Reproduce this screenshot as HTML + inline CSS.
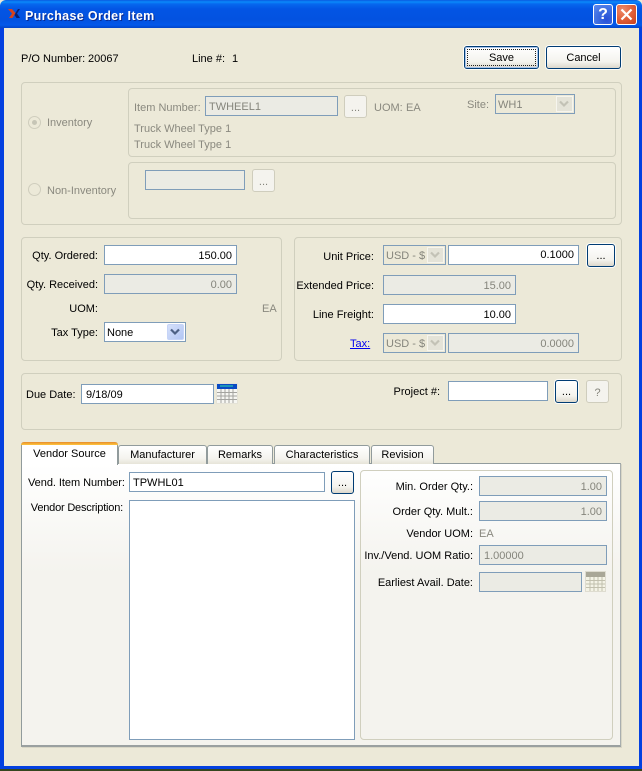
<!DOCTYPE html>
<html><head><meta charset="utf-8"><title>Purchase Order Item</title>
<style>
html,body{margin:0;padding:0;}
body{width:642px;height:771px;overflow:hidden;position:relative;background:#ece9d8;font:11px/14px "Liberation Sans",sans-serif;color:#000;letter-spacing:0;}
body *{position:absolute;box-sizing:border-box;}
.l{white-space:nowrap;height:14px;margin-top:1px;}
.r{text-align:right;}
.d{color:#8a897f;}
.g{border:1px solid #d0cfbe;border-radius:4px;}
.i{border:1px solid #7f9db9;background:#fff;height:20px;padding:3px 4px 0 4px;white-space:nowrap;}
.x{background:#ebebe4;color:#85857c;}
.b{border:1px solid #003c74;border-radius:3px;background:linear-gradient(#fff,#f4f3ee 70%,#dcd8cc);text-align:center;height:23px;line-height:22px;box-shadow:0 0 0 1px #fdfcf8;}
.bd{border:1px solid #cfcdbd;border-radius:3px;background:#f4f3ee;color:#85857c;text-align:center;height:23px;line-height:24px;}
.t{border:1px solid #919b9c;border-bottom:0;border-radius:3px 3px 0 0;background:linear-gradient(#fff,#f4f3ee 70%,#e6e4d8);text-align:center;height:19px;line-height:19px;top:445px;}
.rad{width:13px;height:13px;border-radius:50%;border:1px solid #cfcdbd;background:#ece9d8;}
.arr{right:1px;top:1px;bottom:1px;width:17px;}
</style></head>
<body>
<!-- window frame -->
<div style="left:0;top:0;width:642px;height:28px;background:linear-gradient(#0a5ae0 0,#0a8afa 2px,#0668ee 4px,#0355e4 9px,#0352e0 20px,#0358ea 25px,#0345c8 28px);border-radius:6px 6px 0 0;"></div>
<div style="left:0;top:28px;width:4px;height:741px;background:#0340e0;"></div>
<div style="left:639px;top:28px;width:3px;height:741px;background:#0340e0;"></div>
<div style="left:0;top:766px;width:642px;height:3px;background:#0340e0;"></div>
<div style="left:0;top:769px;width:642px;height:2px;background:#35461f;"></div>

<!-- title icon -->
<svg style="left:8px;top:8px;" width="12" height="11" viewBox="0 0 12 11"><path d="M0 1h4l3.500 4L4.500 10H1L4 5.500z" fill="#d8421c"/><path d="M7.500 5 10 1h2L9 5.500 12 10H8.500L6.500 7z" fill="#0b1f70"/></svg>
<div class="l" style="left:25px;top:8px;color:#fff;font-weight:bold;font-size:12.5px;letter-spacing:.35px;text-shadow:1px 1px 0 #0a2a90;">Purchase Order Item</div>

<!-- title buttons -->
<div style="left:593px;top:4px;width:20px;height:21px;border:1px solid #fff;border-radius:3px;background:radial-gradient(circle at 70% 75%,#2850d8,#3d6de0 50%,#5f8cf0);"></div>
<div class="l" style="left:593px;top:5px;width:20px;text-align:center;color:#fff;font-weight:bold;font-size:16px;line-height:18px;height:18px;letter-spacing:0;">?</div>
<div style="left:616px;top:4px;width:21px;height:21px;border:1px solid #fff;border-radius:3px;background:radial-gradient(circle at 30% 25%,#ee8a6a,#e0603a 50%,#c8401c);"></div>
<svg style="left:616px;top:4px;" width="21" height="21" viewBox="0 0 21 21"><path d="M5.500 5.500 15.500 15.500M15.500 5.500 5.500 15.500" stroke="#fff" stroke-width="2.200" fill="none"/></svg>

<!-- header row -->
<div class="l" style="left:21px;top:51px;">P/O Number:</div>
<div class="l" style="left:88px;top:51px;">20067</div>
<div class="l" style="left:192px;top:51px;">Line #:</div>
<div class="l" style="left:232px;top:51px;">1</div>
<div class="b" style="left:464px;top:46px;width:75px;border-width:1px;">Save<div style="left:2px;top:2px;right:2px;bottom:2px;border:1px dotted #222;"></div><div style="left:0;top:0;right:0;bottom:0;border:1px solid #a8c4ec;border-radius:2px;"></div></div>
<div class="b" style="left:546px;top:46px;width:75px;">Cancel</div>

<!-- top group -->
<div class="g" style="left:21px;top:82px;width:601px;height:143px;"></div>
<div class="g" style="left:128px;top:88px;width:488px;height:69px;"></div>
<div class="g" style="left:128px;top:162px;width:488px;height:57px;"></div>
<div class="rad" style="left:28px;top:116px;"></div>
<div style="left:32px;top:120px;width:5px;height:5px;border-radius:50%;background:#c6c5b6;"></div>
<div class="l d" style="left:47px;top:115px;">Inventory</div>
<div class="rad" style="left:28px;top:183px;"></div>
<div class="l d" style="left:47px;top:183px;">Non-Inventory</div>
<div class="l d" style="left:134px;top:100px;">Item Number:</div>
<div class="i x" style="left:205px;top:96px;width:133px;padding-left:3px;">TWHEEL1</div>
<div class="bd" style="left:344px;top:95px;width:23px;">...</div>
<div class="l d" style="left:374px;top:100px;">UOM:</div>
<div class="l d" style="left:406px;top:100px;">EA</div>
<div class="l d" style="left:467px;top:97px;">Site:</div>
<div class="i" style="left:495px;top:94px;width:80px;background:#ece9d8;color:#85857c;padding-left:2px;">WH1
<div class="arr" style="background:#e4e3d8;border:1px solid #f6f5ee;"></div>
<svg style="left:62px;top:5px;" width="12" height="8" viewBox="0 0 12 8"><path d="M2 1.500 6 5.500 10 1.500" stroke="#c3c2b6" stroke-width="2.200" fill="none"/></svg></div>
<div class="l d" style="left:134px;top:121px;">Truck Wheel Type 1</div>
<div class="l d" style="left:134px;top:137px;">Truck Wheel Type 1</div>
<div class="i x" style="left:145px;top:170px;width:100px;"></div>
<div class="bd" style="left:252px;top:169px;width:23px;">...</div>

<!-- qty group -->
<div class="g" style="left:21px;top:237px;width:261px;height:124px;"></div>
<div class="l r" style="left:10px;width:88px;top:248px;">Qty. Ordered:</div>
<div class="i r" style="left:104px;top:245px;width:133px;">150.00</div>
<div class="l r" style="left:10px;width:88px;top:277px;">Qty. Received:</div>
<div class="i r x" style="left:104px;top:274px;width:133px;">0.00</div>
<div class="l r" style="left:10px;width:88px;top:301px;">UOM:</div>
<div class="l d" style="left:262px;top:301px;">EA</div>
<div class="l r" style="left:10px;width:88px;top:325px;">Tax Type:</div>
<div class="i" style="left:104px;top:322px;width:82px;padding-left:2px;">None
<div class="arr" style="background:linear-gradient(135deg,#d5e0fa,#b2c6f4);border:1px solid #c6d4f7;border-radius:2px;"></div>
<svg style="left:64px;top:5px;" width="12" height="8" viewBox="0 0 12 8"><path d="M2 1.500 6 5.500 10 1.500" stroke="#4d6185" stroke-width="2.200" fill="none"/></svg></div>

<!-- price group -->
<div class="g" style="left:294px;top:237px;width:328px;height:124px;"></div>
<div class="l r" style="left:280px;width:94px;top:249px;">Unit Price:</div>
<div class="i" style="left:383px;top:245px;width:63px;background:#ece9d8;color:#85857c;padding-left:2px;">USD - $
<div class="arr" style="background:#e4e3d8;border:1px solid #f6f5ee;"></div>
<svg style="left:45px;top:5px;" width="12" height="8" viewBox="0 0 12 8"><path d="M2 1.500 6 5.500 10 1.500" stroke="#c3c2b6" stroke-width="2.200" fill="none"/></svg></div>
<div class="i r" style="left:448px;top:245px;width:131px;padding-top:2px;">0.1000</div>
<div class="b" style="left:587px;top:244px;width:28px;">...</div>
<div class="l r" style="left:280px;width:94px;top:278px;">Extended Price:</div>
<div class="i r x" style="left:383px;top:275px;width:133px;">15.00</div>
<div class="l r" style="left:280px;width:94px;top:307px;">Line Freight:</div>
<div class="i r" style="left:383px;top:304px;width:133px;">10.00</div>
<div class="l" style="left:350px;top:336px;color:#0000ee;text-decoration:underline;">Tax:</div>
<div class="i" style="left:383px;top:333px;width:63px;background:#ece9d8;color:#85857c;padding-left:2px;">USD - $
<div class="arr" style="background:#e4e3d8;border:1px solid #f6f5ee;"></div>
<svg style="left:45px;top:5px;" width="12" height="8" viewBox="0 0 12 8"><path d="M2 1.500 6 5.500 10 1.500" stroke="#c3c2b6" stroke-width="2.200" fill="none"/></svg></div>
<div class="i r x" style="left:448px;top:333px;width:131px;">0.0000</div>

<!-- date group -->
<div class="g" style="left:21px;top:373px;width:601px;height:57px;"></div>
<div class="l" style="left:26px;top:387px;">Due Date:</div>
<div class="i" style="left:81px;top:384px;width:133px;">9/18/09</div>
<svg style="left:216px;top:383px;" width="22" height="21" viewBox="0 0 22 21"><rect width="22" height="21" fill="#e4e2d6"/><rect x="1" y="1" width="20" height="5" fill="#0a4bc4"/><rect x="4" y="2" width="13" height="2" fill="#1c95b8"/><rect x="1" y="6" width="20" height="14" fill="#f6f6f2"/><path d="M1 9.500h20M1 13h20M1 16.500h20M5 6v14M9 6v14M13 6v14M17 6v14" stroke="#a4a4a0" stroke-width="1" fill="none"/></svg>
<div class="l r" style="left:350px;width:90px;top:384px;">Project #:</div>
<div class="i" style="left:448px;top:381px;width:100px;"></div>
<div class="b" style="left:555px;top:380px;width:23px;">...</div>
<div class="bd" style="left:586px;top:380px;width:23px;">?</div>

<!-- tabs -->
<div style="left:21px;top:463px;width:600px;height:284px;border:1px solid #919b9c;border-right-color:#a8aeae;border-bottom:2px solid #9aa0a0;background:linear-gradient(#fff,#f4f3ee 110px);box-shadow:1px 1px 0 #d8d6c6;"></div>
<div class="t" style="left:118px;width:89px;">Manufacturer</div>
<div class="t" style="left:207px;width:66px;">Remarks</div>
<div class="t" style="left:274px;width:96px;">Characteristics</div>
<div class="t" style="left:371px;width:63px;">Revision</div>
<div style="left:21px;top:442px;width:97px;height:23px;border:1px solid #919b9c;border-top:0;border-bottom:0;background:#fff;border-radius:3px 3px 0 0;"></div>
<div style="left:21px;top:442px;width:97px;height:3px;background:linear-gradient(#e68b2c,#ffc73c);border-radius:3px 3px 0 0;"></div>
<div class="l" style="left:21px;width:97px;text-align:center;top:446px;">Vendor Source</div>

<!-- tab content -->
<div class="l" style="left:28px;top:475px;letter-spacing:-.05px;">Vend. Item Number:</div>
<div class="i" style="left:129px;top:472px;width:196px;padding-left:3px;">TPWHL01</div>
<div class="b" style="left:331px;top:471px;width:23px;">...</div>
<div class="l r" style="left:20px;width:103px;top:500px;letter-spacing:-.2px;">Vendor Description:</div>
<div class="i" style="left:129px;top:500px;width:226px;height:240px;"></div>

<div class="g" style="left:360px;top:470px;width:253px;height:270px;"></div>
<div class="l r" style="left:360px;width:113px;top:479px;">Min. Order Qty.:</div>
<div class="i r x" style="left:479px;top:476px;width:128px;">1.00</div>
<div class="l r" style="left:360px;width:113px;top:504px;">Order Qty. Mult.:</div>
<div class="i r x" style="left:479px;top:501px;width:128px;">1.00</div>
<div class="l r" style="left:360px;width:113px;top:526px;">Vendor UOM:</div>
<div class="l d" style="left:479px;top:526px;">EA</div>
<div class="l r" style="left:360px;width:113px;top:548px;">Inv./Vend. UOM Ratio:</div>
<div class="i x" style="left:479px;top:545px;width:128px;">1.00000</div>
<div class="l r" style="left:360px;width:113px;top:575px;">Earliest Avail. Date:</div>
<div class="i x" style="left:479px;top:572px;width:103px;"></div>
<svg style="left:585px;top:571px;" width="21" height="21" viewBox="0 0 21 21"><rect width="21" height="21" fill="#dedcd0"/><rect x="1" y="1" width="19" height="5" fill="#a9a797"/><rect x="1" y="6" width="19" height="14" fill="#f4f3e6"/><path d="M1 9.500h19M1 13h19M1 16.500h19M5 6v14M9 6v14M13 6v14M17 6v14" stroke="#c2c0ae" stroke-width="1" fill="none"/></svg>
</body></html>
